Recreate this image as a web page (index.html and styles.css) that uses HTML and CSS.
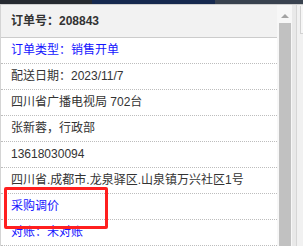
FILE: index.html
```html
<!DOCTYPE html>
<html lang="zh-CN">

<head>
    <meta charset="UTF-8">
    <title>订单详情</title>
    <link rel="stylesheet" href="styles.css">
</head>

<body>
    <!-- 顶部导航条 -->
    <div class="topbar">
        <span class="seg seg-dark"></span>
        <span class="seg seg-navy"></span>
        <span class="seg seg-slate"></span>
    </div>
    <div class="main">
        <!-- 订单信息 -->
        <div class="panel">
            <div class="panel-head"><b>订单号：208843</b></div>
            <div class="row link">订单类型：销售开单</div>
            <div class="row">配送日期：2023/11/7</div>
            <div class="row">四川省广播电视局 702台</div>
            <div class="row">张新蓉，行政部</div>
            <div class="row">13618030094</div>
            <div class="row">四川省.成都市.龙泉驿区.山泉镇万兴社区1号</div>
            <div class="row link">采购调价</div>
            <div class="row link">对账：未对账</div>
            <div class="mark"></div>
        </div>
        <!-- 滚动条 -->
        <div class="scrollbar">
            <span class="arrow"></span>
            <span class="thumb"></span>
        </div>
        <div class="side">
            <div class="side-box">
                <div class="side-tab"></div>
            </div>
        </div>
    </div>
</body>

</html>
```

FILE: styles.css
```css
/* 整体样式 */
body {
    margin: 0;
    height: 246px;
    overflow: hidden;
    background-color: #efefef;
    font-family: "Liberation Sans", "Noto Sans CJK SC", sans-serif;
    font-size: 12px;
    color: #333;
}

/* 顶部导航条 */
.topbar {
    display: flex;
    height: 4px;
    border-bottom: 1px solid #cfcfcf;
}

.seg-dark {
    width: 92px;
    background-color: #262a31;
}

.seg-navy {
    width: 123px;
    background-color: #16294f;
}

.seg-slate {
    flex: 1;
    background-color: #39424f;
}

.main {
    display: flex;
}

/* 订单信息 */
.panel {
    position: relative;
    width: 276px;
    height: 241px;
    border-left: 1px solid #d4d4d4;
    background-color: #fff;
    overflow: hidden;
}

.panel-head {
    height: 32px;
    line-height: 32px;
    padding-left: 10px;
    background-color: #f2f2f2;
    border-bottom: 1px solid #cccccc;
}

.row {
    height: 25px;
    line-height: 25px;
    padding-left: 10px;
    border-bottom: 1px dotted #bdbdbd;
    white-space: nowrap;
}

.row.link {
    color: #1414ff;
}

/* 红框标注 */
.mark {
    position: absolute;
    left: 3px;
    top: 182px;
    width: 98px;
    height: 36px;
    border: 3px solid #ff1f1f;
    border-radius: 2px;
}

/* 滚动条 */
.scrollbar {
    position: relative;
    width: 15px;
    height: 241px;
    background-color: #f7f7f7;
}

.arrow {
    position: absolute;
    left: 4px;
    top: 9px;
    border-left: 4px solid transparent;
    border-right: 4px solid transparent;
    border-bottom: 4px solid #a3a3a3;
}

.thumb {
    position: absolute;
    left: 2px;
    top: 18px;
    width: 12px;
    height: 230px;
    background-color: #c1c1c1;
}

.side {
    flex: 1;
    padding-left: 4px;
    background-color: #e9e9e9;
}

.side-box {
    height: 241px;
    padding: 1px 0 0 3px;
    border-left: 1px solid #d6d6d6;
    background-color: #f1f1f1;
}

.side-tab {
    height: 27px;
    border-left: 1px solid #d2d2d2;
    border-bottom: 1px solid #d2d2d2;
    background-color: #f6f6f6;
}
```
